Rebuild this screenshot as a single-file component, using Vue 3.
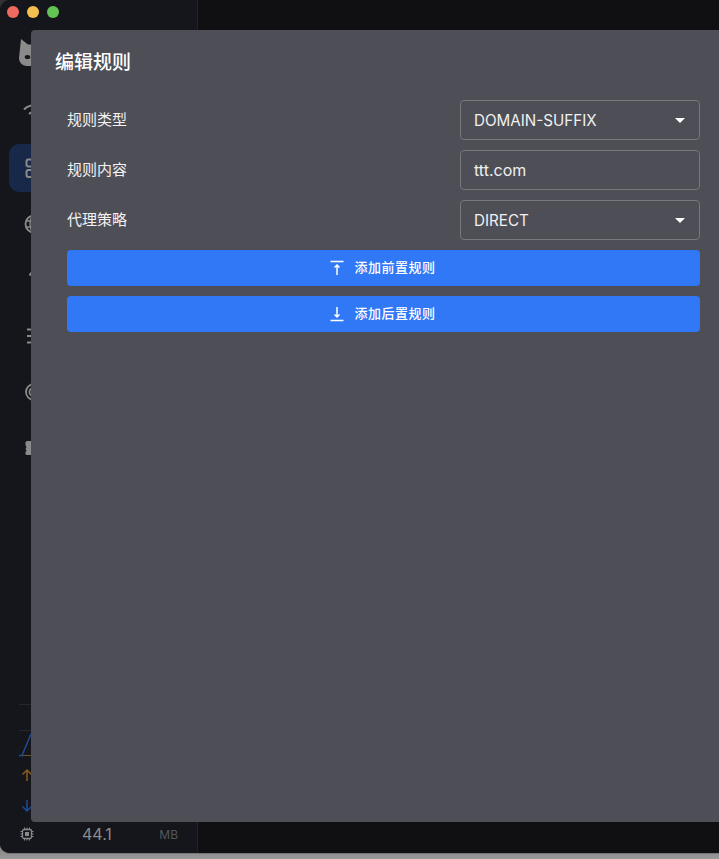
<script setup>
const fields = [
  { label: '规则类型', value: 'DOMAIN-SUFFIX', select: true },
  { label: '规则内容', value: 'ttt.com', select: false },
  { label: '代理策略', value: 'DIRECT', select: true }
]
</script>

<template>
  <div class="screen">
    <div class="window">
      <aside class="sidebar">
        <div class="lights">
          <span class="light red"></span>
          <span class="light yellow"></span>
          <span class="light green"></span>
        </div>
        <svg class="logo" width="14" height="30" viewBox="19 38 14 30">
          <path d="M19 58 L21 39 L28 44.500 H33 V66 H27 C22 66 19 62 19 58 Z" fill="#8a8a8a" />
          <ellipse cx="27.500" cy="57" rx="2.800" ry="2" fill="#15161b" />
        </svg>
        <nav class="nav">
          <div class="nav-item"><svg width="22" height="22" viewBox="0 0 22 22"><path d="M1 8.500A14 14 0 0 1 21 8.500M6 13a7 7 0 0 1 10 0" fill="none" stroke="#8a8a8a" stroke-width="2"/></svg></div>
          <div class="nav-item active"><svg width="22" height="22" viewBox="0 0 22 22"><rect x="3.500" y="2.500" width="7" height="7" rx="2" fill="none" stroke="#8a8a8a" stroke-width="2"/><rect x="3.500" y="13" width="7" height="7" rx="2" fill="none" stroke="#8a8a8a" stroke-width="2"/></svg></div>
          <div class="nav-item"><svg width="22" height="22" viewBox="0 0 22 22"><circle cx="11" cy="11" r="8.500" fill="none" stroke="#8a8a8a" stroke-width="1.800"/><path d="M3 8h16M3 14h16" stroke="#8a8a8a" stroke-width="1.400"/><ellipse cx="11" cy="11" rx="4" ry="8.500" fill="none" stroke="#8a8a8a" stroke-width="1.400"/></svg></div>
          <div class="nav-item"><svg width="22" height="22" viewBox="0 0 22 22"><path d="M8.500 3.500L6.500 6.500" stroke="#8a8a8a" stroke-width="2"/></svg></div>
          <div class="nav-item"><svg width="22" height="22" viewBox="0 0 22 22"><path d="M4 4.500h14M4 11h14M4 17.500h14" stroke="#8a8a8a" stroke-width="2"/></svg></div>
          <div class="nav-item"><svg width="22" height="22" viewBox="0 0 22 22"><circle cx="11" cy="11" r="8" fill="none" stroke="#8a8a8a" stroke-width="1.800"/><circle cx="11" cy="11" r="4.500" fill="none" stroke="#8a8a8a" stroke-width="1.800"/></svg></div>
          <div class="nav-item"><svg width="22" height="22" viewBox="0 0 22 22"><path d="M4 4h8v14H4c-2 0-2-3-.500-4-1-1-1-3 0-4C2 8 2 4 4 4z" fill="#8a8a8a"/></svg></div>
        </nav>
        <div class="traffic">
          <div class="grid-line"></div>
          <div class="grid-line second"></div>
          <svg class="chart" width="40" height="26" viewBox="0 0 40 26"><path d="M19 24.500h21" stroke="#6e5229" stroke-width="1"/><path d="M19 24.500h3L31 3" fill="none" stroke="#1f4a94" stroke-width="1.500"/></svg>
          <svg class="arrow up" width="14" height="14" viewBox="0 0 14 14"><path d="M7 13V2M2.500 6.500L7 2l4.500 4.500" fill="none" stroke="#8a5a1c" stroke-width="1.500"/></svg>
          <svg class="arrow down" width="14" height="14" viewBox="0 0 14 14"><path d="M7 1v11M2.500 7.500L7 12l4.500-4.500" fill="none" stroke="#1f4a94" stroke-width="1.500"/></svg>
          <div class="memory">
            <svg width="14" height="14" viewBox="0 0 14 14"><rect x="2.500" y="2.500" width="9" height="9" rx="1.500" fill="none" stroke="#8a8a8a" stroke-width="1.300"/><rect x="5" y="5" width="4" height="4" fill="#8a8a8a"/><path d="M4.500 0.500v2M7 0.500v2M9.500 0.500v2M4.500 11.500v2M7 11.500v2M9.500 11.500v2M0.500 4.500h2M0.500 7h2M0.500 9.500h2M11.500 4.500h2M11.500 7h2M11.500 9.500h2" stroke="#8a8a8a"/></svg>
            <span class="mem-value">44.1</span>
            <span class="mem-unit">MB</span>
          </div>
        </div>
      </aside>
      <main class="content"></main>
    </div>

    <section class="dialog">
      <h2 class="title">编辑规则</h2>
      <div class="form">
        <div v-for="f in fields" :key="f.label" class="row">
          <span class="label">{{ f.label }}</span>
          <div class="control" :class="{ 'is-select': f.select }">
            <span>{{ f.value }}</span>
            <span v-if="f.select" class="caret"></span>
          </div>
        </div>
        <button class="btn" type="button">
          <svg width="16" height="16" viewBox="0 0 16 16"><path d="M1.500 1.500h13M8 15V5M5.500 7.500L8 5l2.500 2.500" fill="none" stroke="#fff" stroke-width="1.500"/></svg>
          <span>添加前置规则</span>
        </button>
        <button class="btn second-btn" type="button">
          <svg width="16" height="16" viewBox="0 0 16 16"><path d="M1.500 14.500h13M8 1v10M5.500 8.500L8 11l2.500-2.500" fill="none" stroke="#fff" stroke-width="1.500"/></svg>
          <span>添加后置规则</span>
        </button>
      </div>
    </section>
  </div>
</template>

<style>
html, body { margin: 0; background: #8f8f8f; }
</style>

<style scoped>
.screen {
  position: relative;
  width: 719px;
  height: 859px;
  overflow: hidden;
  background: linear-gradient(#333, #333 90%, #8a8a8a 99%, #9a9a9a);
  font-family: Inter, "Noto Sans CJK SC", sans-serif;
}
.window {
  display: flex;
  height: 853px;
  border-radius: 10px 0 0 10px;
  border-bottom: 1px solid #77777a;
  overflow: hidden;
  background: #101012;
}
.sidebar {
  box-sizing: border-box;
  width: 198px;
  height: 100%;
  position: relative;
  background: #15161b;
  border-right: 1px solid #212226;
  display: flex;
  flex-direction: column;
}
.lights {
  display: flex;
  gap: 8px;
  padding: 6px 0 0 7px;
}
.light { width: 12px; height: 12px; border-radius: 50%; }
.red { background: #ee6a5e; }
.yellow { background: #f5bf4f; }
.green { background: #61c454; }
.logo { margin: 20px 0 0 19px; }
.nav {
  display: flex;
  flex-direction: column;
  align-items: flex-start;
  gap: 8px;
  margin-top: 20px;
}
.nav-item {
  box-sizing: border-box;
  width: 170px;
  height: 48px;
  margin-left: 9px;
  padding-left: 14px;
  display: flex;
  align-items: center;
  border-radius: 10px;
}
.active { background: #172848; }
.traffic {
  position: absolute;
  left: 0;
  right: 0;
  bottom: 0;
  height: 149px;
}
.grid-line {
  position: absolute;
  left: 19px;
  right: 0;
  top: 0;
  height: 1px;
  background: #25262b;
}
.grid-line.second { top: 26px; }
.chart { position: absolute; left: 0; top: 27px; }
.arrow { position: absolute; left: 20px; }
.up { top: 64px; }
.down { top: 95px; }
.memory {
  position: absolute;
  left: 20px;
  top: 120px;
  width: 158px;
  display: flex;
  align-items: center;
  color: #8c8c8c;
}
.mem-value { margin-left: 48px; font-size: 16px; }
.mem-unit { margin-left: auto; font-size: 12px; color: #55565c; }
.content { flex: 1; }
.dialog {
  position: absolute;
  left: 31px;
  top: 30px;
  right: 0;
  height: 792px;
  box-sizing: border-box;
  padding: 20px 19px 0 24px;
  background: #4e4e57;
  border-radius: 4px 0 0 4px;
  color: #fff;
}
.title {
  margin: 0;
  font-size: 19px;
  font-weight: 500;
  line-height: 26px;
}
.form {
  display: flex;
  flex-direction: column;
  margin: 24px 0 0 12px;
}
.row {
  display: flex;
  align-items: center;
  justify-content: space-between;
  height: 40px;
  margin-bottom: 10px;
}
.label { font-size: 15px; line-height: 22px; color: #f2f2f2; }
.control {
  box-sizing: border-box;
  width: 240px;
  height: 40px;
  padding: 0 14px 0 13px;
  display: flex;
  align-items: center;
  justify-content: space-between;
  border: 1px solid #77777e;
  border-radius: 4px;
  font-size: 16px;
  color: #f0f0f0;
}
.is-select { font-size: 15.200px; }
.caret {
  width: 0;
  height: 0;
  border-left: 5px solid transparent;
  border-right: 5px solid transparent;
  border-top: 5px solid #fff;
}
.btn {
  height: 36px;
  border: 0;
  border-radius: 4px;
  background: #3178f6;
  color: #fff;
  font: 500 13px/16px Inter, "Noto Sans CJK SC", sans-serif;
  letter-spacing: 0.5px;
  display: flex;
  align-items: center;
  justify-content: center;
  gap: 9px;
  padding: 0 2px 0 0;
}
.btn span { position: relative; top: -1px; }
.second-btn { margin-top: 10px; }
</style>
